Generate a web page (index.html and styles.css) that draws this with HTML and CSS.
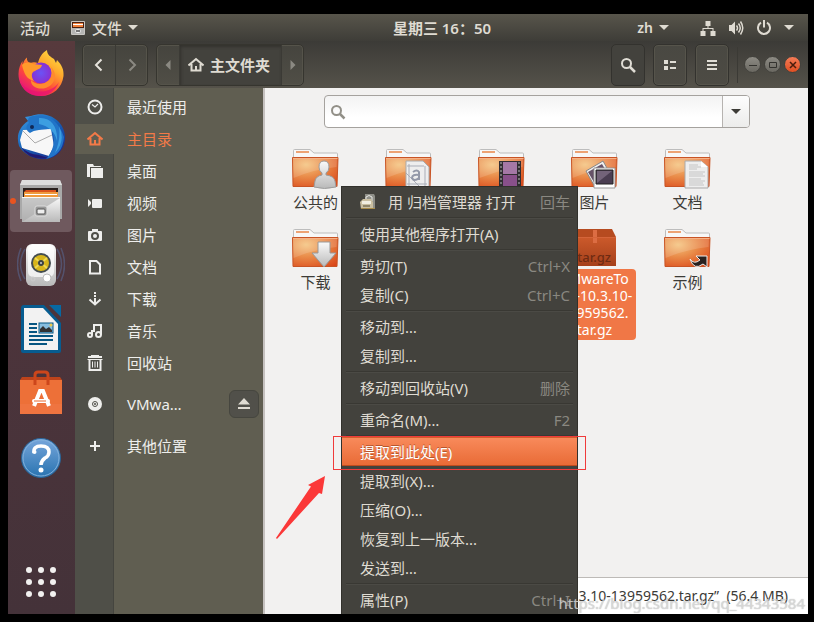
FILE: index.html
```html
<!DOCTYPE html>
<html lang="zh-CN">
<head>
<meta charset="utf-8">
<title>主文件夹</title>
<link rel="stylesheet" href="styles.css">
</head>
<body>
<svg class="defs" aria-hidden="true">
  <defs>
    <radialGradient id="gFold" cx=".3" cy=".25" r=".95"><stop offset="0" stop-color="#f4c27c"/><stop offset=".45" stop-color="#e98a48"/><stop offset="1" stop-color="#da4618"/></radialGradient>
    <linearGradient id="gMetal" x2="0" y2="1"><stop offset="0" stop-color="#fafafa"/><stop offset="1" stop-color="#b9b9b9"/></linearGradient>
    <symbol id="folder" viewBox="0 0 48 40">
      <path d="M1.500 12V1.500Q1.500.5 2.500.5H18l4 3.500H44.500Q45.500 4 45.500 5V12Z" fill="#f7f7f7" stroke="#bdbdbd"/>
      <rect x="4" y="2" width="13" height="2" fill="#eda273"/>
      <path d="M.5 8.500H46L45 37.500H1Z" fill="url(#gFold)" stroke="#c85425"/>
      <path d="M1 9.500H45L44.500 18Q23 20 1.500 29Z" fill="#fff" opacity=".15"/>
      <path d="M1 9.500H45.500" stroke="#f6b187"/>
    </symbol>
  </defs>
</svg>
<div class="desktop">
  <header class="topbar">
    <button class="top-item activities">活动</button>
    <button class="top-item app-menu">
      <svg width="14" height="14" viewBox="0 0 14 14"><rect width="14" height="14" rx="1" fill="#c9c7c3"/><path d="M1 1H13V7H1Z" fill="#4a2010"/><path d="M2 2H12V3H2ZM2 4H12V6H2Z" fill="#f0813b"/><path d="M2 3H12V4H2Z" fill="#fff"/><path d="M1 7H13V13H1Z" fill="#b5b5b3"/><rect x="4.500" y="8.500" width="5" height="3" rx="1" fill="#777" stroke="#eee"/></svg>
      <span>文件</span><i class="caret"></i>
    </button>
    <button class="top-item clock">星期三 16：50</button>
    <div class="tray">
      <button class="top-item lang"><span>zh</span><i class="caret"></i></button>
      <button class="top-item system" aria-label="系统">
        <svg width="16" height="16" viewBox="0 0 16 16" fill="#dfdbd2"><path d="M5.500 1h5v5h-5zM.5 11h5v5h-5zM10.500 11h5v5h-5zM7.500 6h1v2h5v3h-1V9H3.500v2h-1V8h5z"/></svg>
        <svg width="16" height="16" viewBox="0 0 16 16" fill="#dfdbd2"><path d="M1 5h2.500L7 1.500v13L3.500 11H1z"/><path d="M8.500 5.500q2 2.500 0 5M10.500 3.500q3.500 4.500 0 9M12.500 1.500q4.500 6.500 0 13" fill="none" stroke="#dfdbd2" stroke-width="1.500"/></svg>
        <svg width="16" height="16" viewBox="0 0 16 16" fill="none" stroke="#dfdbd2" stroke-width="2"><path d="M5 2.700a6 6 0 1 0 6 0M8 0v7.500"/></svg>
        <i class="caret"></i>
      </button>
    </div>
  </header>
  <div class="workspace">
    <nav class="dock" aria-label="Dock">
      <button class="launcher" aria-label="Firefox"><svg width="48" height="48" viewBox="0 0 48 48"><defs><linearGradient id="ff" x1="1" y1="0" x2=".3" y2="1"><stop offset="0" stop-color="#fff04a"/><stop offset=".4" stop-color="#ffa82c"/><stop offset=".7" stop-color="#ff4b37"/><stop offset="1" stop-color="#e5137e"/></linearGradient><radialGradient id="ffb"><stop offset="0" stop-color="#6b53f5"/><stop offset="1" stop-color="#8a2fd0"/></radialGradient></defs><path d="M24 47C11 47 1.500 38 1.500 25c0-6 2-10 4-13v4C7 12 8 10 10 8.500c-.5 3 1 4.500 3 5.500 3-1 5-1 8 0 1-5 4-10 9-13 0 5 4 7 7 9l2 4 1-3c5 5 7 10 6.500 16C45 39 36 47 24 47Z" fill="url(#ff)"/><circle cx="24" cy="24" r="10.500" fill="url(#ffb)"/><path d="M5 16c3-3 8-3 11-1l9 1c-1 4-4 4-7 6-4 1-4 6-1 10C9 30 7 24 5 16Z" fill="#ff9a2b"/><path d="M33 17c4 5 3 12-2 15-6 5-14 3-17-1-1 8 12 12 20 5 6-6 5-14-1-19Z" fill="#ff8b2d"/><path d="M4 34c6 9 28 14 38-1-4 10-12 14-20 14C13 47 6 41 4 34Z" fill="#e81470" opacity=".75"/></svg></button>
      <button class="launcher" aria-label="Thunderbird"><svg width="48" height="48" viewBox="0 0 48 48"><defs><linearGradient id="tb" x2=".8" y2="1"><stop offset="0" stop-color="#3fa0e8"/><stop offset=".5" stop-color="#1763b8"/><stop offset="1" stop-color="#1a2a8c"/></linearGradient></defs><path d="M14 3C31-3 47 8 48 23c1 11-7 22-19 23-10 1-22-4-27-13-3-10 0-19 9-25l-3-4Z" fill="url(#tb)"/><path d="M6 17 34 16 37 33 32 43 5 35 3 27Z" fill="#f7f7f7"/><path d="m6 18 12 12 17-8" fill="none" stroke="#aaa"/><path d="M34 16C26 16 17 17 13 20c-4-2-5-7-1-10-2-3-1-6 4-7C29 0 41 6 47 24c-1 13-7 19-18 22 8-8 10-20 5-30Z" fill="#2174c8"/><path d="M22 5c12-1 19 9 18 23-2-9-8-15-18-17ZM42 13q7 15-4 27 6-14 4-27Z" fill="#4bb5ee" opacity=".65"/><path d="M4 34q7 7 18 8l9 3Q12 48 4 34" fill="#211a73"/><circle cx="15" cy="14" r="2" fill="#112856"/></svg></button>
      <button class="launcher running" aria-label="文件"><svg width="48" height="48" viewBox="0 0 48 48"><path d="M5 3H43L45 8V42H3V8Z" fill="#a9a9a9"/><path d="M5 3H43L45 8H3Z" fill="#dedede"/><path d="M6 11H41V22H6Z" fill="#29211f"/><path d="M9 13H39V22H7V15Z" fill="#d9531e"/><path d="M7 15H41V22H7Z" fill="#f09a3e"/><path d="M8 17H40V18H8Z" fill="#fff"/><path d="M5 20H43V45H5Z" fill="url(#gMetal)"/><path d="M5 21H43L5 45Z" fill="#a9a9a9" opacity=".6"/><rect x="18" y="29" width="12" height="10" rx="2" fill="#999" stroke="#ddd"/><rect x="20" y="32" width="8" height="5" rx="1" fill="#eee" stroke="#555"/></svg></button>
      <button class="launcher" aria-label="Rhythmbox"><svg width="48" height="48" viewBox="0 0 48 48"><g fill="none" stroke="#58658d" stroke-width="1.500" opacity=".6"><path d="M8 8q-9 15 0 30M4 7q-7 17 0 33M40 8q9 15 0 30M44 7q7 17 0 33"/></g><rect x="9" y="3" width="30" height="42" rx="6" fill="url(#gMetal)"/><rect x="11" y="4" width="26" height="32" rx="5" fill="#fff" opacity=".7"/><circle cx="24" cy="22" r="10" fill="#444d50"/><circle cx="24" cy="22" r="8" fill="#d7b51b"/><path d="M18 17 30 27M18 27 30 17" stroke="#efd954" stroke-width="2"/><circle cx="24" cy="22" r="3" fill="#3b4243"/><circle cx="24" cy="22" r="1" fill="#ccc"/><circle cx="30" cy="37" r="4" fill="#fff" stroke="#bbb"/><circle cx="16" cy="38" r="2" fill="none" stroke="#ccc"/></svg></button>
      <button class="launcher" aria-label="LibreOffice Writer"><svg width="48" height="48" viewBox="0 0 48 48"><path d="M7 0H27L44 18V46Q44 48 42 48H6Q4 48 4 46V3Q4 0 7 0Z" fill="#075c90"/><path d="M32 0H44V12Z" fill="#0769a3"/><path d="M7 3H26L41 19V45H7Z" fill="#f2f2f2"/><path d="M12 19h8M12 23h8M12 27h8M12 31h24M12 35h24M12 39h18" stroke="#075682" stroke-width="2"/><rect x="22" y="18" width="14" height="10" fill="#87bee0" stroke="#075682"/><path d="M23 27V24l3-3 3 3 3-2 3 3v2Z" fill="#333"/><circle cx="34" cy="20" r="1.500" fill="#ecc94c"/></svg></button>
      <button class="launcher" aria-label="Ubuntu 软件"><svg width="48" height="48" viewBox="0 -2 48 48"><path d="M3 9 5 6H43L45 9V13H3Z" fill="#bd431b"/><path d="M3 9H45V43H3Z" fill="#ef7440"/><path d="M3 9H45V33H3Z" fill="#ec6f35" opacity=".7"/><path d="M18 14V4Q18 1 21 1h7q3 0 3 3v10" fill="none" stroke="#cd461b" stroke-width="3"/><path d="m17 35 6-15h3l6 15" fill="none" stroke="#fff" stroke-width="4"/><rect x="15" y="28" width="18" height="4" rx="2" fill="#fff"/><path d="M17 30H29" stroke="#e9682f"/></svg></button>
      <button class="launcher" aria-label="帮助"><svg width="48" height="48" viewBox="0 0 48 48"><defs><linearGradient id="hp" x2="0" y2="1"><stop offset="0" stop-color="#77a6db"/><stop offset="1" stop-color="#2873b0"/></linearGradient></defs><circle cx="24" cy="25" r="19.500" fill="url(#hp)" stroke="#296497"/><circle cx="24" cy="25" r="18" fill="none" stroke="#82b1dc"/><path d="M17 20q-1-7 7-7 8 0 8 6 0 4-4 6-4 3-4 7" fill="none" stroke="#fff" stroke-width="3.500"/><circle cx="17.500" cy="19" r="2" fill="#fff"/><circle cx="24" cy="37" r="2.500" fill="#fff"/></svg></button>
      <button class="launcher apps" aria-label="显示应用程序"><svg width="30" height="30" viewBox="0 0 30 30" fill="#f2f1f0"><circle cx="3" cy="3" r="3"/><circle cx="15" cy="3" r="3"/><circle cx="27" cy="3" r="3"/><circle cx="3" cy="15" r="3"/><circle cx="15" cy="15" r="3"/><circle cx="27" cy="15" r="3"/><circle cx="3" cy="27" r="3"/><circle cx="15" cy="27" r="3"/><circle cx="27" cy="27" r="3"/></svg></button>
    </nav>
    <main class="window">
      <div class="toolbar">
        <div class="group">
          <button class="tool" aria-label="后退"><svg width="16" height="16" viewBox="0 0 16 16"><path d="M10.500 2.500 5 8l5.500 5.500" fill="none" stroke="#e6e3dc" stroke-width="2"/></svg></button>
          <button class="tool" aria-label="前进"><svg width="16" height="16" viewBox="0 0 16 16"><path d="M5.500 2.500 11 8l-5.500 5.500" fill="none" stroke="#8b8982" stroke-width="2"/></svg></button>
        </div>
        <div class="group path">
          <button class="tool narrow" aria-label="上级路径"><svg width="6" height="10" viewBox="0 0 6 10"><path d="M5.500 0V10L.5 5Z" fill="#8b8982"/></svg></button>
          <button class="tool current"><svg width="16" height="16" viewBox="0 0 16 16"><path d="M.5 8.500 8 2l7.500 6.500M3.500 7v6.500h9V7M8 14V9" fill="none" stroke="#dfdbd2" stroke-width="2"/></svg><span>主文件夹</span></button>
          <button class="tool narrow" aria-label="下级路径"><svg width="6" height="10" viewBox="0 0 6 10"><path d="M.5 0V10L5.500 5Z" fill="#8b8982"/></svg></button>
        </div>
        <div class="actions">
          <button class="tool solo pressed" aria-label="搜索"><svg width="16" height="16" viewBox="0 0 16 16" fill="none" stroke="#e0ddd5"><circle cx="6.500" cy="6.500" r="4.500" stroke-width="2"/><path d="m10 10 5 5" stroke-width="2.500"/></svg></button>
          <button class="tool solo" aria-label="视图"><svg width="16" height="16" viewBox="0 0 16 16" fill="#e0ddd5"><path d="M2 3h4v4H2zM2 9h4v4H2zM8 4h6v2H8zM8 10h6v2H8z"/></svg></button>
          <button class="tool solo" aria-label="菜单"><svg width="16" height="16" viewBox="0 0 16 16" fill="#e0ddd5"><path d="M3 3h10v2H3zM3 7h10v2H3zM3 11h10v2H3z"/></svg></button>
        </div>
        <div class="controls">
          <button class="wm" aria-label="最小化"><svg width="10" height="10" viewBox="0 0 10 10"><path d="M1 5.500H9" stroke="#33322e"/></svg></button>
          <button class="wm" aria-label="最大化"><svg width="10" height="10" viewBox="0 0 10 10"><path d="M1.500 2.500h7v5h-7z" fill="none" stroke="#33322e"/></svg></button>
          <button class="wm close" aria-label="关闭"><svg width="10" height="10" viewBox="0 0 10 10"><path d="m2 2 6 6M8 2 2 8" stroke="#4a1c0c" stroke-width="1.500"/></svg></button>
        </div>
      </div>
      <div class="body">
        <aside class="sidebar">
          <a class="place" href="#"><svg viewBox="0 0 16 16"><circle cx="8" cy="8" r="6.500" fill="none" stroke="currentColor" stroke-width="2"/><path d="m5 5.500 3 2.500 3-3" fill="none" stroke="currentColor" stroke-width="1.200"/></svg><span>最近使用</span></a>
          <a class="place active" href="#"><svg viewBox="0 0 16 16"><path d="M.5 8.500 8 2l7.500 6.500M3.500 7v6.500h9V7M8 14V9" fill="none" stroke="currentColor" stroke-width="2"/></svg><span>主目录</span></a>
          <a class="place" href="#"><svg viewBox="0 0 16 16"><path d="M0 1h6l1 2h7v1H3v10H0zM4 5h12v10H4z"/></svg><span>桌面</span></a>
          <a class="place" href="#"><svg viewBox="0 0 16 16"><path d="M1 4l3 3v2l-3 3zM5 5q0-1 1-1h8q1 0 1 1v7q0 1-1 1H6q-1 0-1-1z"/></svg><span>视频</span></a>
          <a class="place" href="#"><svg viewBox="0 0 16 16"><path fill-rule="evenodd" d="M5 2h6v2h3q1 0 1 1v8q0 1-1 1H2q-1 0-1-1V5q0-1 1-1h3zM8 5a4 4 0 1 0 0 8 4 4 0 0 0 0-8"/><circle cx="8" cy="9" r="2"/></svg><span>图片</span></a>
          <a class="place" href="#"><svg viewBox="0 0 16 16"><path d="M3 2h6.500L13 5.500V14.500H3z" fill="none" stroke="currentColor" stroke-width="2"/></svg><span>文档</span></a>
          <a class="place" href="#"><svg viewBox="0 0 16 16"><path d="M7 1h2v2H7zM7 4h2v2H7zM7 7h2v5H7z"/><path d="m2.500 8.500 5.500 5 5.500-5" fill="none" stroke="currentColor" stroke-width="2"/></svg><span>下载</span></a>
          <a class="place" href="#"><svg viewBox="0 0 16 16"><g fill="none" stroke="currentColor" stroke-width="2"><circle cx="3" cy="12" r="2"/><circle cx="11.500" cy="11.500" r="2.500"/><path d="M5 12V8h3M7 8V2h7v9.500"/></g></svg><span>音乐</span></a>
          <a class="place" href="#"><svg viewBox="0 0 16 16"><path d="M4 0h8v1h3v2H1V1h3zM.5 4h15v1h-15z"/><path d="M2.500 5v10h11V5" fill="none" stroke="currentColor" stroke-width="2"/><path d="M5.500 6.500v6M8 6.500v6M10.500 6.500v6" stroke="currentColor"/></svg><span>回收站</span></a>
          <div class="place tall spaced"><svg viewBox="0 0 16 16"><circle cx="8" cy="8" r="7"/><circle cx="8" cy="8" r="2.500" fill="none" stroke="#4f4f48"/><circle cx="8" cy="8" r="1" fill="#4f4f48"/></svg><a href="#">VMwa…</a><button class="eject" aria-label="弹出"><svg width="14" height="14" viewBox="0 0 14 14" fill="#dfdbd2"><path d="M7 1l6 6.500H1zM1 10h12v2H1z"/></svg></button></div>
          <a class="place tall" href="#"><svg viewBox="0 0 16 16"><path d="M7 3h2v4h4v2H9v4H7V9H3V7h4z"/></svg><span>其他位置</span></a>
        </aside>
        <section class="files">
          <div class="search">
            <svg width="16" height="16" viewBox="0 0 16 16" fill="none" stroke="#929088"><circle cx="6.500" cy="6.500" r="4.500" stroke-width="2"/><path d="m10 10 4.500 4.500" stroke-width="2.500"/></svg>
            <input class="query" type="text" aria-label="搜索文件">
            <button class="drop" aria-label="搜索选项"><i class="caret dark"></i></button>
          </div>
          <div class="grid">
            <a class="file" href="#"><svg width="48" height="40" viewBox="0 0 48 40"><use href="#folder"/><path d="M32 12q5 0 5 6 0 4-3 6v2q8 1 9 6l1 6q-12 3-22 0l1-6q1-5 7-6v-2q-3-2-3-6 0-6 5-6Z" fill="url(#gMetal)" stroke="#9c9c9c"/></svg><span class="name">公共的</span></a>
            <a class="file" href="#" aria-label="模板"><svg width="48" height="40" viewBox="0 0 48 40"><use href="#folder"/><path d="M21 12H38L44 18V40H21Z" fill="#eee" stroke="#aaa"/><path d="M24 15V38M40 17V38M22 17H39M22 35H42M21 24 37 40" stroke="#a9adb7"/><path d="M28 23q4-3 6 0v8M34 26q-7-1-7 3 2 4 7 0" fill="none" stroke="#9398a8" stroke-width="2"/></svg></a>
            <a class="file" href="#" aria-label="视频"><svg width="48" height="40" viewBox="0 0 48 40"><use href="#folder"/><path d="M21 12H43V40H21Z" fill="#312d31"/><path d="M25 13H39V25H25Z" fill="#a578a6"/><path d="M25 26H39V40H25Z" fill="#89508a"/><path d="M23 13V40M41 13V40" stroke="#bbb" stroke-dasharray="2 2"/></svg></a>
            <a class="file" href="#"><svg width="48" height="40" viewBox="0 0 48 40"><use href="#folder"/><path d="m15 22 17-10 9 16-17 10Z" fill="#f0f0f0" stroke="#888"/><path d="m17 23 14-8 7 12-14 8Z" fill="#665268"/><path d="M23 19H44V39H23Z" fill="#fff" stroke="#999"/><path d="M25 21H42V35H25Z" fill="#4a3d51" stroke="#222"/><path d="M26 22H41L26 34Z" fill="#85738a" opacity=".7"/></svg><span class="name">图片</span></a>
            <a class="file" href="#"><svg width="48" height="40" viewBox="0 0 48 40"><use href="#folder"/><path d="M21 12H37L44 18V39H21Z" fill="#eee" stroke="#aaa"/><path d="m37 12 7 6h-7Z" fill="#fff"/><path d="M25 16h9M25 18h12M25 20h8M25 23h16M25 25h14M25 27h16M25 30h12M25 32h16M25 34h14M25 36h15" stroke="#b9b9b9" stroke-width=".8"/></svg><span class="name">文档</span></a>
            <a class="file" href="#"><svg width="48" height="40" viewBox="0 0 48 40"><use href="#folder"/><path d="M26 13H38V24H44L32 38 20 24H26Z" fill="url(#gMetal)" stroke="#999"/></svg><span class="name">下载</span></a>
            <a class="file" href="#" aria-label="音乐"><svg width="48" height="40" viewBox="0 0 48 40"><use href="#folder"/></svg></a>
            <a class="file" href="#" aria-label="桌面"><svg width="48" height="40" viewBox="0 0 48 40"><use href="#folder"/></svg></a>
            <a class="file selected" href="#"><svg width="48" height="40" viewBox="0 0 48 40"><defs><linearGradient id="bx" x2="0" y2="1"><stop offset="0" stop-color="#cc5a2b"/><stop offset="1" stop-color="#a5401b"/></linearGradient></defs><path d="M4 0H41L45 8H1Z" fill="#b64b20"/><path d="M1 8H45V37H1Z" fill="url(#bx)"/><path d="M22 1H26V14H22Z" fill="#dc6d43"/><path d="M1 8.500H45" stroke="#d5653a"/><text class="box-text" x="40" y="33" text-anchor="end">tar.gz</text></svg><span class="name">VMwareTo<wbr>ols-10.3.10-<wbr>13959562.<wbr>tar.gz</span></a>
            <a class="file" href="#"><svg width="48" height="40" viewBox="0 0 48 40"><use href="#folder"/><path d="M32 27H43V38L39 35Q30 42 26 30q4 6 10 1Z" fill="#29211f" stroke="#eee"/></svg><span class="name">示例</span></a>
          </div>
          <div class="status">3.10-13959562.tar.gz”&nbsp; (56.4 MB)</div>
          <div class="menu" role="menu">
            <button class="item" role="menuitem"><svg width="16" height="16" viewBox="0 0 16 16"><path d="M5 0h9l1 2v12H5z" fill="#8f8f88"/><path d="M6 5V3q3-3 6 0v4" fill="none" stroke="#e8e8e4"/><path d="M0 8l3-3h8l2 3v7H1z" fill="#c9bea0"/><path d="M2 7h9v3H2z" fill="#f0eddf"/><path d="M3 11h7v2H3z" fill="#8d8468"/><path d="M1 14.500h14" stroke="#a78b49"/></svg><span>用 归档管理器 打开</span><kbd>回车</kbd></button>
            <hr>
            <button class="item" role="menuitem"><span>使用其他程序打开(A)</span></button>
            <hr>
            <button class="item" role="menuitem"><span>剪切(T)</span><kbd>Ctrl+X</kbd></button>
            <button class="item" role="menuitem"><span>复制(C)</span><kbd>Ctrl+C</kbd></button>
            <hr>
            <button class="item" role="menuitem"><span>移动到…</span></button>
            <button class="item" role="menuitem"><span>复制到…</span></button>
            <hr>
            <button class="item" role="menuitem"><span>移动到回收站(V)</span><kbd>删除</kbd></button>
            <hr>
            <button class="item" role="menuitem"><span>重命名(M)…</span><kbd>F2</kbd></button>
            <hr>
            <button class="item hot" role="menuitem"><span>提取到此处(E)</span></button>
            <button class="item" role="menuitem"><span>提取到(X)…</span></button>
            <button class="item" role="menuitem"><span>压缩(O)…</span></button>
            <button class="item" role="menuitem"><span>恢复到上一版本...</span></button>
            <button class="item" role="menuitem"><span>发送到…</span></button>
            <hr>
            <button class="item" role="menuitem"><span>属性(P)</span><kbd>Ctrl+I</kbd></button>
          </div>
          <div class="marker"></div>
          <svg class="arrow" width="52" height="66" viewBox="0 0 52 66"><path d="M50 1 33 10l3 1.500L1 63l1 1L44 18l3 1Z" fill="#fb3838"/></svg>
        </section>
      </div>
    </main>
  </div>
  <div class="watermark">https://blog.csdn.net/qq_44343584</div>
</div>
</body>
</html>
```
FILE: styles.css
```css
* { box-sizing: border-box; }

body {
  margin: 0;
  padding: 14px 6px 8px 8px;
  height: 100vh;
  background: #000;
  color: #dfdbd2;
  font: 15px/20px "Noto Sans", "Noto Sans CJK SC", sans-serif;
}

button {
  margin: 0;
  padding: 0;
  border: 0;
  background: none;
  color: inherit;
  font: inherit;
}

a { color: inherit; text-decoration: none; }
svg { display: block; flex: none; }
.defs { position: absolute; width: 0; height: 0; }

.caret {
  border: 5px solid transparent;
  border-top-color: #dfdbd2;
  border-bottom: 0;
}
.caret.dark { border-top-color: #3c3b37; }

.desktop {
  position: relative;
  display: flex;
  flex-direction: column;
  height: 100%;
  overflow: hidden;
}

/* Top panel */
.topbar {
  position: relative;
  display: flex;
  height: 27px;
  flex: none;
  padding: 0 14px 0 12px;
  background: linear-gradient(#58554b, #3e3d38);
  font-weight: 500;
  text-shadow: 0 -1px #2c2b28;
}
.top-item { display: flex; align-items: center; gap: 6px; }
.app-menu { margin-left: 21px; }
.app-menu svg { margin-right: 1px; }
.clock {
  position: absolute;
  inset: 0 0 0 68px;
  width: max-content;
  margin: 0 auto;
  font-weight: 600;
}
.tray { display: flex; gap: 31px; margin-left: auto; }
.lang { font-weight: 600; font-size: 14px; }
.system { gap: 12px; }

.workspace { display: flex; flex: 1; min-height: 0; }

/* Dock */
.dock {
  display: flex;
  flex-direction: column;
  align-items: center;
  gap: 2px;
  flex: none;
  width: 67px;
  padding: 1px 1px 1px 0;
  background: linear-gradient(#573a3d, #4c343b 50%, #443239);
}
.launcher {
  position: relative;
  display: grid;
  place-items: center;
  width: 62px;
  height: 62px;
}
.running { border-radius: 4px; background: #6f595e; }
.running::before {
  content: "";
  position: absolute;
  left: 0;
  width: 6px;
  height: 6px;
  border-radius: 50%;
  background: #e95420;
}
.apps { margin-top: auto; }

/* Window header */
.window { display: flex; flex: 1; flex-direction: column; min-width: 0; }
.toolbar {
  display: flex;
  align-items: center;
  flex: none;
  height: 47px;
  padding: 0 7px;
  background: linear-gradient(#3c3b37, #55524a);
}
.group {
  display: flex;
  height: 42px;
  border: 1px solid #36352f;
  border-radius: 5px;
  background: linear-gradient(#45443e, #504e46);
  box-shadow: inset 0 0 0 1px #55534a;
}
.path { margin-left: 8px; }
.tool { display: flex; align-items: center; justify-content: center; width: 32px; }
.tool + .tool { border-left: 1px solid #3b3a35; }
.narrow { width: 22px; }
.current {
  justify-content: flex-start;
  gap: 6px;
  width: 102px;
  padding-left: 8px;
  background: #43423d;
  box-shadow: inset 1px 2px 3px #33322e;
  font-weight: 600;
}
.actions { display: flex; gap: 8px; margin-left: auto; }
.tool.solo {
  width: 34px;
  height: 42px;
  border: 1px solid #33322e;
  border-radius: 5px;
  background: linear-gradient(#494842, #4d4b44);
  box-shadow: inset 0 0 0 1px #56544b;
}
.tool.pressed { background: #43423d; box-shadow: none; }
.controls {
  display: flex;
  align-items: center;
  gap: 3px;
  height: 36px;
  margin-left: 8px;
  padding-left: 6px;
  border-left: 1px solid #3b3a35;
}
.wm {
  display: grid;
  place-items: center;
  width: 17px;
  height: 17px;
  border: 1px solid #43423d;
  border-radius: 50%;
  background: linear-gradient(#8d8b84, #6a6861);
}
.close { background: linear-gradient(#f47b56, #e04f22); }

.body { display: flex; flex: 1; min-height: 0; }

/* Places */
.sidebar {
  display: flex;
  flex-direction: column;
  gap: 2px;
  flex: none;
  width: 190px;
  padding-top: 4px;
  border-right: 2px solid #c5c1bf;
  background: linear-gradient(to right, #4f4f48 38px, #45453f 38px 39px, #605e51 39px);
}
.place { display: flex; align-items: center; height: 30px; padding-left: 12px; color: #eeeeec; }
.place > svg { width: 16px; height: 16px; margin-right: 24px; fill: currentColor; }
.active { background: #605e51; color: #f37a48; }
.tall { height: 40px; }
.spaced { margin-top: 4px; }
.eject {
  display: grid;
  place-items: center;
  width: 30px;
  height: 28px;
  margin: 0 4px 0 auto;
  border: 1px solid #46463f;
  border-radius: 6px;
  background: #51504a;
}

/* Files */
.files {
  position: relative;
  flex: 1;
  min-width: 0;
  padding-top: 7px;
  background: #f2f1f0;
  color: #3c3b37;
}
.search {
  display: flex;
  align-items: center;
  width: 426px;
  max-width: 90%;
  height: 33px;
  margin: 0 auto 21px;
  padding-left: 5px;
  border: 1px solid #a5a29e;
  border-radius: 4px;
  background: linear-gradient(#f3f3f3, #fff 70%);
}
.query { flex: 1; min-width: 0; height: 100%; border: 0; background: none; font: inherit; outline: 0; }
.drop {
  display: grid;
  place-items: center;
  width: 27px;
  height: 100%;
  border-left: 1px solid #b6b3b0;
  border-radius: 0 3px 3px 0;
  background: linear-gradient(#fdfdfd, #ececeb);
}
.grid {
  display: grid;
  grid-template-columns: repeat(auto-fill, 93px);
  grid-auto-rows: 80px;
  padding-left: 4px;
}
.file { display: flex; flex-direction: column; align-items: center; text-align: center; }
.name { padding-top: 3px; }
.selected .name {
  width: 83px;
  padding: 1px 0 2px;
  border-radius: 4px;
  background: #f07746;
  color: #fff;
  font-size: 14px;
  line-height: 17px;
}
.box-text { fill: #6e2b12; font-size: 13px; font-weight: 500; }
.status {
  position: absolute;
  right: 0;
  bottom: 0;
  left: 313px;
  display: flex;
  justify-content: flex-end;
  height: 37px;
  padding: 8px 20px 0 0;
  border-top: 1px solid #bdbab7;
  background: #fff;
  font-size: 14px;
  white-space: nowrap;
}

/* Context menu */
.menu {
  position: absolute;
  left: 76px;
  top: 98px;
  width: 237px;
  border: 1px solid #32312c;
  background: #43423d;
  color: #dfdbd2;
}
.item {
  display: flex;
  align-items: center;
  width: 100%;
  height: 29px;
  padding: 0 7px 0 18px;
  text-align: left;
  white-space: nowrap;
}
.item svg { margin-right: 12px; }
.item kbd { margin-left: auto; color: #8a8881; font: inherit; }
.hot {
  background: linear-gradient(#f98b5c, #e86a35);
  box-shadow: inset 0 1px #d55d2c, inset 0 -1px #c04c1e;
  color: #fff;
  text-shadow: 0 -1px #b5562f;
}
.menu hr {
  height: 3px;
  margin: 0 4px;
  border: 0;
  background: linear-gradient(transparent 1px, #393833 1px 2px, #4b4a45 2px);
}

/* Annotations */
.marker {
  position: absolute;
  left: 68px;
  top: 348px;
  width: 253px;
  height: 34px;
  border: 1px solid #f03b3b;
}
.arrow { position: absolute; left: 10px; top: 387px; }
.watermark {
  position: absolute;
  right: 3px;
  bottom: 1px;
  color: rgba(225, 225, 225, .75);
  text-shadow: 0 0 1px rgba(120, 120, 120, .6);
  white-space: nowrap;
}
```
